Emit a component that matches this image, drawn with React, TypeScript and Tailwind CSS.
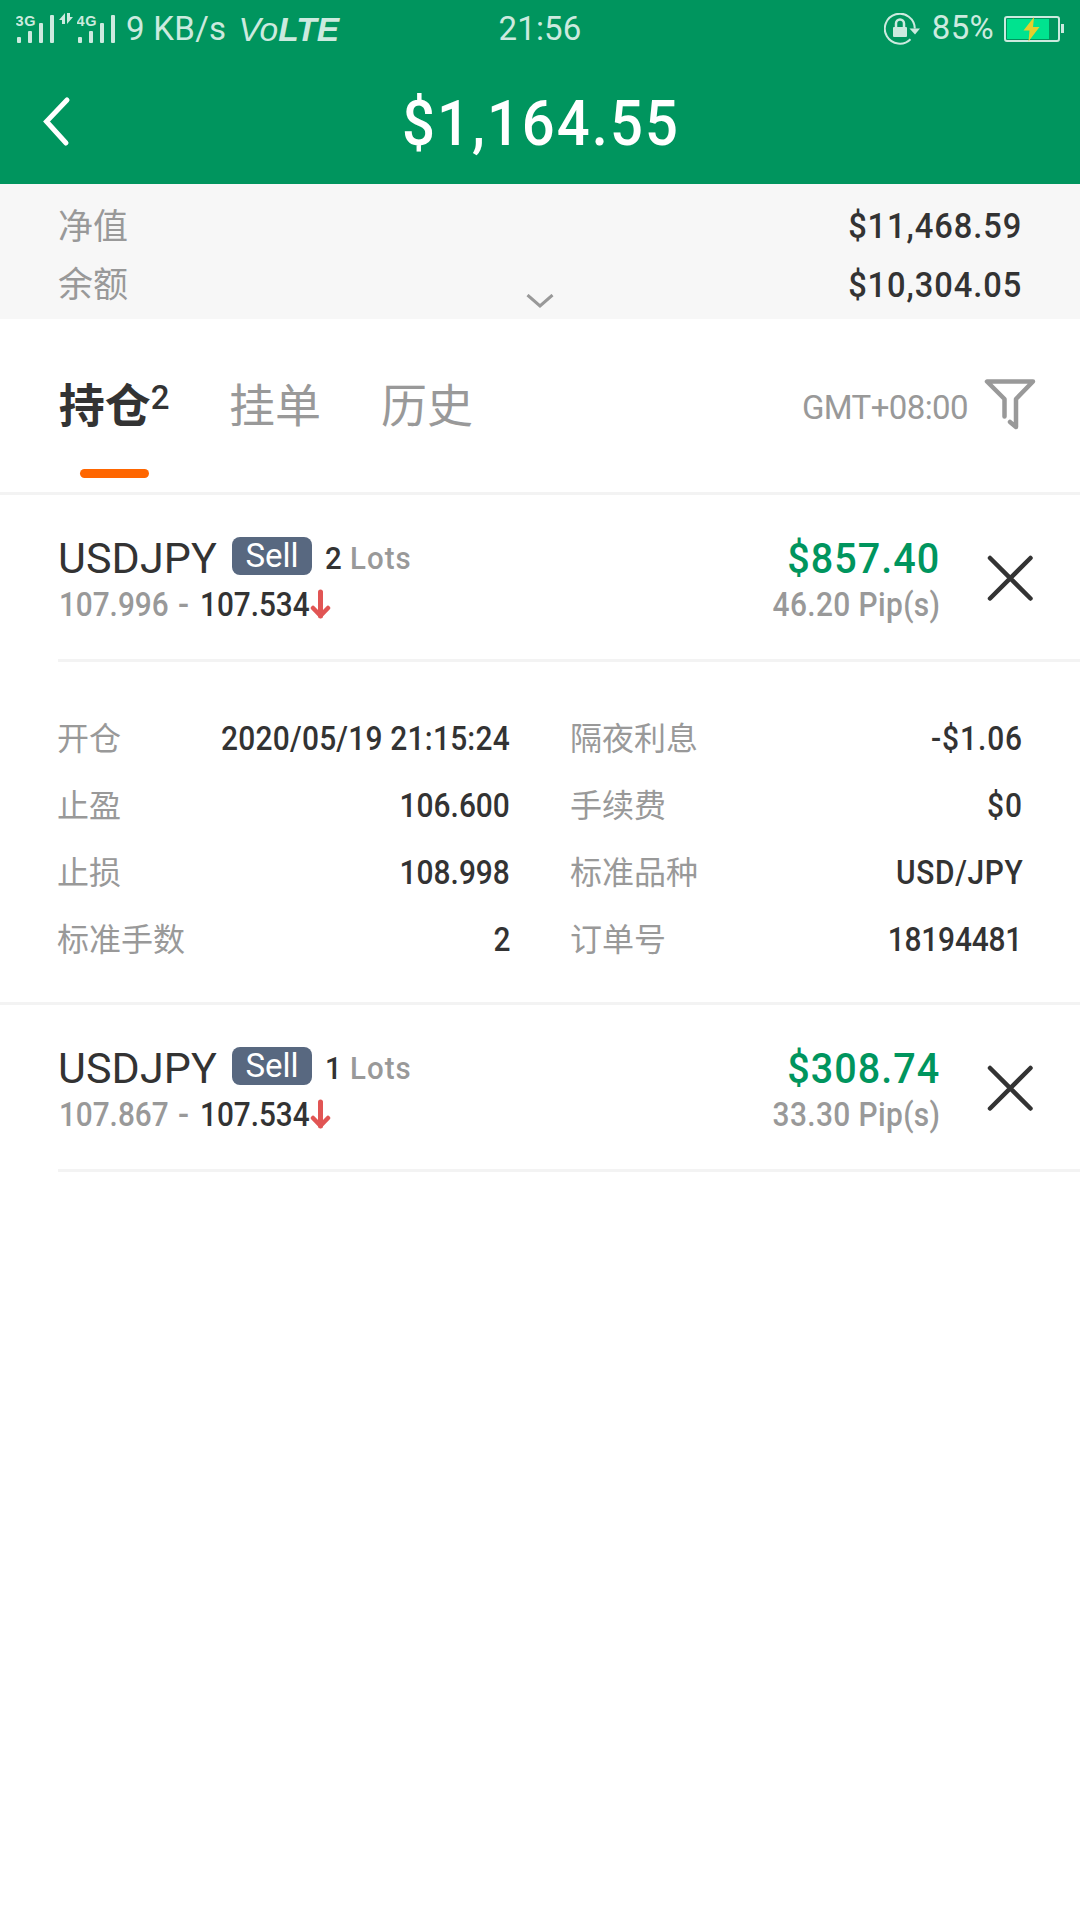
import React from "react";

type Position = {
  symbol: string;
  lots: string;
  open: string;
  current: string;
  profit: string;
  pips: string;
};

type Detail = { label: string; value: string; spacing?: string };

const positions: Position[] = [
  { symbol: "USDJPY", lots: "2", open: "107.996", current: "107.534", profit: "$857.40", pips: "46.20 Pip(s)" },
  { symbol: "USDJPY", lots: "1", open: "107.867", current: "107.534", profit: "$308.74", pips: "33.30 Pip(s)" },
];

const leftDetails: Detail[] = [
  { label: "开仓", value: "2020/05/19 21:15:24", spacing: "tracking-[0.25px] -mr-px" },
  { label: "止盈", value: "106.600", spacing: "tracking-normal -mr-px" },
  { label: "止损", value: "108.998", spacing: "tracking-normal -mr-px" },
  { label: "标准手数", value: "2", spacing: "tracking-normal -mr-px" },
];

const rightDetails: Detail[] = [
  { label: "隔夜利息", value: "-$1.06", spacing: "tracking-[1px] -mr-px" },
  { label: "手续费", value: "$0", spacing: "tracking-[1px] -mr-px" },
  { label: "标准品种", value: "USD/JPY", spacing: "tracking-[0.7px] -mr-px" },
  { label: "订单号", value: "18194481", spacing: "tracking-[-0.2px]" },
];

function Signal({ label }: { label: string }) {
  return (
    <svg width="40" height="32" viewBox="0 0 40 32" fill="currentColor" className="shrink-0">
      <text x="-0.5" y="12.5" fontSize="14.5" fontWeight="700" fontFamily="Liberation Sans, sans-serif" textLength="20">
        {label}
      </text>
      <rect x="1" y="24" width="4" height="6" rx="1" />
      <rect x="12" y="18" width="4" height="12" rx="1" />
      <rect x="23" y="10" width="4" height="20" rx="1" />
      <rect x="34" y="2" width="4" height="28" rx="1" />
    </svg>
  );
}

function StatusBar() {
  return (
    <div className="grid h-[54px] grid-cols-3 items-center text-[33px] leading-[54px] text-[#cceadf]">
      <div className="flex items-center pl-4 whitespace-nowrap">
        <Signal label="3G" />
        <svg width="14" height="14" viewBox="0 0 14 14" fill="currentColor" className="mb-[20px] ml-[3px] shrink-0">
          <path d="M6 1v11H3V8H0L6 1zM8 1h3v4H14L8 12z" />
        </svg>
        <span className="ml-1 flex">
          <Signal label="4G" />
        </span>
        <span className="ml-[9px] tracking-[0.3px]">9 KB/s</span>
        <span className="ml-[12px] pt-[3px] font-['Liberation_Sans'] text-[33.500px] italic">
          Vo<b>LTE</b>
        </span>
      </div>
      <div className="text-center tracking-[0.2px]">21:56</div>
      <div className="flex items-center justify-end pr-4 whitespace-nowrap">
        <svg width="36" height="32" viewBox="0 0 36 32" fill="none" stroke="currentColor" className="shrink-0">
          <path d="M26.500 26.200A15 15 0 1 1 30.800 15.500" strokeWidth="2" />
          <path d="M25.500 15.500h10.500l-5 6z" fill="currentColor" stroke="none" />
          <rect x="9" y="14" width="14" height="10" rx="1" fill="currentColor" stroke="none" />
          <path d="M12 14V10.500a4 4 0 0 1 8 0V14" strokeWidth="2.500" />
        </svg>
        <span className="mr-[10px] -mt-px ml-3 tracking-[0.3px]">85%</span>
        <svg width="60" height="26" viewBox="0 0 60 26" className="shrink-0">
          <rect x="1" y="1" width="54" height="24" rx="2" fill="none" stroke="#cceadf" strokeWidth="2" />
          <rect x="3" y="3" width="42" height="20" fill="#00e38f" />
          <path d="M57 8h3v9h-3z" fill="#cceadf" />
          <path d="M30 1 19.500 14.500h6L24.500 25.500 35.500 11h-6.500z" fill="#e6cf2d" />
        </svg>
      </div>
    </div>
  );
}

function PositionRow({ p }: { p: Position }) {
  return (
    <div className="pl-[58px]">
      <div className="flex h-[167px] items-center border-b-[3px] border-[#f3f3f3] pt-[3px] pr-[46px]">
        <div className="flex flex-1 flex-col pt-[6px]">
          <div className="flex h-[47px] items-center">
            <span className="w-[174px] text-[43px] leading-[47px] tracking-[0.1px] text-[#333]">{p.symbol}</span>
            <span className="mb-[5px] flex h-[38px] w-20 items-center justify-center rounded-[8px] bg-[#586880] text-[33px] leading-[38px] text-white">
              Sell
            </span>
            <span className="ml-[13px] w-[25px] origin-left scale-x-[0.92] text-[32px] font-medium text-[#333]">{p.lots}</span>
            <span className="origin-left scale-x-[0.92] text-[32px] font-medium tracking-[1.1px] text-[#999]">Lots</span>
          </div>
          <div className="flex h-[47px] items-center pt-px text-[32.500px] font-medium">
            <span className="w-[120px] origin-left scale-x-[0.915] pl-px text-[#999]">{p.open}</span>
            <span className="w-[22px] text-[#999]">-</span>
            <span className="w-[110px] origin-left scale-x-[0.915] text-[#333]">{p.current}</span>
            <svg width="22" height="32" viewBox="0 0 22 32" fill="none" stroke="#e15554" strokeLinecap="round" strokeLinejoin="round" className="mb-[4px] shrink-0">
              <path d="M10.500 4v24" strokeWidth="5" />
              <path d="M3 20l7.500 7.800L18 20" strokeWidth="4.500" />
            </svg>
          </div>
        </div>
        <div className="flex flex-col items-end pt-[6px] font-medium">
          <span className="-mr-px h-[47px] origin-right scale-x-[0.92] text-[43px] leading-[47px] tracking-[1.1px] text-[#00955e]">{p.profit}</span>
          <span className="-mr-px h-[47px] origin-right scale-x-[0.92] text-[32.500px] leading-[46px] tracking-[0.4px] text-[#999]">{p.pips}</span>
        </div>
        <svg width="48" height="48" viewBox="0 0 48 48" stroke="#333" strokeWidth="4.500" strokeLinecap="round" className="mb-px ml-[47px] shrink-0">
          <path d="M4 4l40.500 40.500M44.500 4 4 44.500" />
        </svg>
      </div>
    </div>
  );
}

function DetailColumn({ rows }: { rows: Detail[] }) {
  return (
    <div className="flex flex-col">
      {rows.map(({ label, value, spacing = "tracking-normal" }) => (
        <div key={label} className="flex h-[67px] items-center justify-between text-[32px] leading-[40px]">
          <span className="pb-[5px] font-['Noto_Sans_CJK_SC'] text-[#999]">{label}</span>
          <span className={"origin-right scale-x-[0.92] text-[32.500px] font-medium text-[#333] " + spacing}>{value}</span>
        </div>
      ))}
    </div>
  );
}

export default function App() {
  return (
    <div className="flex h-[1920px] w-[1080px] flex-col overflow-hidden bg-white font-['Roboto','Noto_Sans_CJK_SC',sans-serif]">
      <header className="h-[184px] bg-[#00955e]">
        <StatusBar />
        <div className="grid h-[130px] grid-cols-[200px_1fr_200px] items-center pb-[3px]">
          <svg width="32" height="56" viewBox="0 0 32 56" fill="none" stroke="white" strokeWidth="5" strokeLinecap="round" className="mt-[4px] ml-10">
            <path d="M27 8 6.500 29.500 26 51" />
          </svg>
          <h1 className="scale-x-[0.92] pt-[12px] pl-0.5 text-center text-[63px] leading-none font-medium tracking-[2.2px] text-white">$1,164.55</h1>
        </div>
      </header>

      <section className="flex h-[135px] bg-[#f7f7f7] pt-[10px] pr-[58px] pl-[58px]">
        <div className="flex flex-1 flex-col font-['Noto_Sans_CJK_SC'] text-[35px] leading-[59px] text-[#999]">
          <span>净值</span>
          <span className="-mt-px">余额</span>
        </div>
        <svg width="28" height="14" viewBox="0 0 28 14" fill="none" stroke="#999" strokeWidth="3" className="mt-[100px]">
          <path d="M1.500 1 14 12 26.500 1" />
        </svg>
        <div className="flex flex-1 flex-col items-end pt-[3px] text-[35.500px] leading-[59px] font-medium tracking-[1px] text-[#333]">
          <span className="origin-right scale-x-[0.92]">$11,468.59</span>
          <span className="origin-right scale-x-[0.92]">$10,304.05</span>
        </div>
      </section>

      <nav className="flex h-[176px] items-start border-b-[3px] border-[#f3f3f3] pt-[53px] pr-11 pl-[59px] text-[46px] leading-[60px] whitespace-nowrap text-[#999]">
        <div className="flex w-[110px] flex-col items-center font-['Noto_Sans_CJK_SC'] text-[#333]">
          <div className="flex h-[60px]">
            <span className="font-bold">持仓</span>
            <span className="-mt-[4px] font-['Roboto'] text-[33px] leading-[60px] font-medium">2</span>
          </div>
          <div className="mt-[37px] h-[9px] w-[69px] rounded-full bg-[#ff6600]" />
        </div>
        <span className="ml-[60px] font-['Noto_Sans_CJK_SC']">挂单</span>
        <span className="ml-[60px] font-['Noto_Sans_CJK_SC']">历史</span>
        <div className="ml-auto flex items-center">
          <span className="pt-[6px] text-[33px] tracking-[-0.6px]">GMT+08:00</span>
          <svg width="54" height="54" viewBox="0 0 54 54" fill="none" stroke="#999" strokeWidth="4.500" strokeLinecap="round" strokeLinejoin="round" className="ml-[14px]">
            <path d="M22.500 38.500V21L5 3.500H51L34 21V49L28 44" />
          </svg>
        </div>
      </nav>

      <PositionRow p={positions[0]} />
      <section className="grid h-[343px] grid-cols-[452px_452px] gap-x-[61px] border-b-[3px] border-[#f3f3f3] pt-[43px] pl-[57px]">
        <DetailColumn rows={leftDetails} />
        <DetailColumn rows={rightDetails} />
      </section>
      <PositionRow p={positions[1]} />
    </div>
  );
}
